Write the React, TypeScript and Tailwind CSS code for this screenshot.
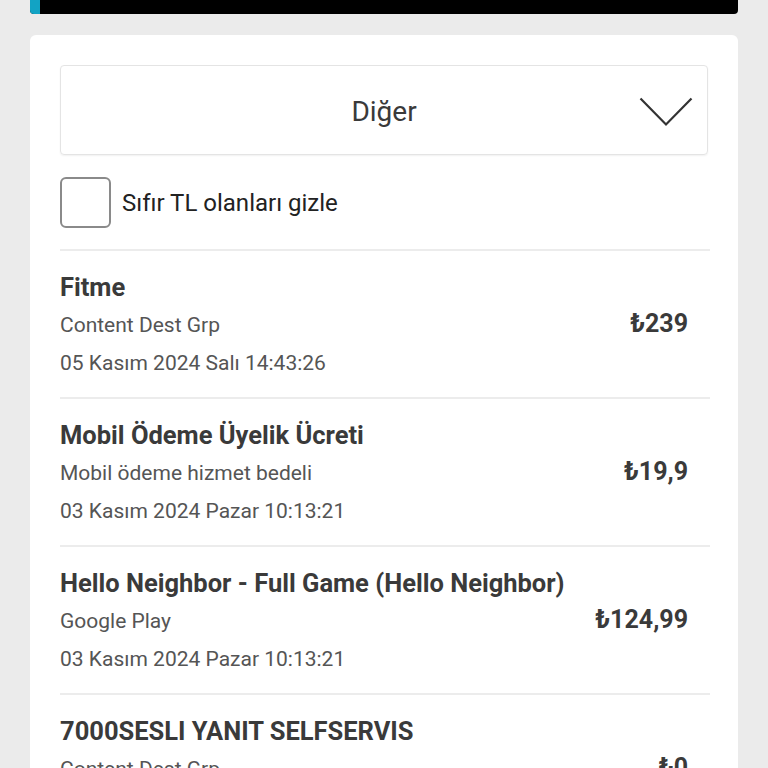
import React from "react";

const items = [
  { title: "Fitme", sub: "Content Dest Grp", date: "05 Kasım 2024 Salı 14:43:26", price: "₺239" },
  { title: "Mobil Ödeme Üyelik Ücreti", sub: "Mobil ödeme hizmet bedeli", date: "03 Kasım 2024 Pazar 10:13:21", price: "₺19,9" },
  { title: "Hello Neighbor - Full Game (Hello Neighbor)", sub: "Google Play", date: "03 Kasım 2024 Pazar 10:13:21", price: "₺124,99" },
  { title: "7000SESLI YANIT SELFSERVIS", sub: "Content Dest Grp", date: "03 Kasım 2024 Pazar 10:13:21", price: "₺0" },
];

export default function App() {
  return (
    <div
      className="h-[768px] overflow-hidden bg-[#ebebeb] px-[30px]"
      style={{ fontFamily: "Roboto, 'Noto Sans', sans-serif" }}
    >
      <div className="flex h-[14px] overflow-hidden rounded-b-[4px] bg-black">
        <div className="w-[10px] bg-[#12a3c4]" />
      </div>
      <div className="mt-[21px] rounded-[6px] bg-white pl-[30px] pr-[28px] pt-[30px]">
        <div className="relative mr-[2px] flex h-[90px] items-center justify-center rounded-[4px] border border-[#e4e4e4] pt-[4px] shadow-[0_1px_2px_rgba(0,0,0,0.06)]">
          <span className="text-[28px] text-[#3a3a3a]">Diğer</span>
          <svg
            className="absolute right-[14px] top-[31px]"
            width="54"
            height="30"
            viewBox="0 0 54 30"
            fill="none"
          >
            <path d="M1.5 1.5 L27 27.5 L52.5 1.5" stroke="#333" strokeWidth="2.2" />
          </svg>
        </div>
        <div className="mt-[22px] flex items-center gap-[11px]">
          <div className="h-[51px] w-[51px] rounded-[6px] border-2 border-[#8a8a8a]" />
          <span className="text-[24px] text-[#222]">Sıfır TL olanları gizle</span>
        </div>
        <div className="mt-[21px]">
          {items.map((it, i) => (
            <div
              key={i}
              className="flex justify-between border-t-2 border-[#ececec] pb-[15px] pr-[22px] pt-[17px]"
            >
              <div className="flex flex-col">
                <div className="text-[25.5px] font-bold leading-[38px] text-[#3a3a3a]">{it.title}</div>
                <div className="text-[21px] leading-[38px] text-[#555]">{it.sub}</div>
                <div className="text-[21px] leading-[38px] text-[#555]">{it.date}</div>
              </div>
              <div className="mt-[37px] text-[25px] font-bold leading-[38px] text-[#3a3a3a]">{it.price}</div>
            </div>
          ))}
        </div>
      </div>
    </div>
  );
}
